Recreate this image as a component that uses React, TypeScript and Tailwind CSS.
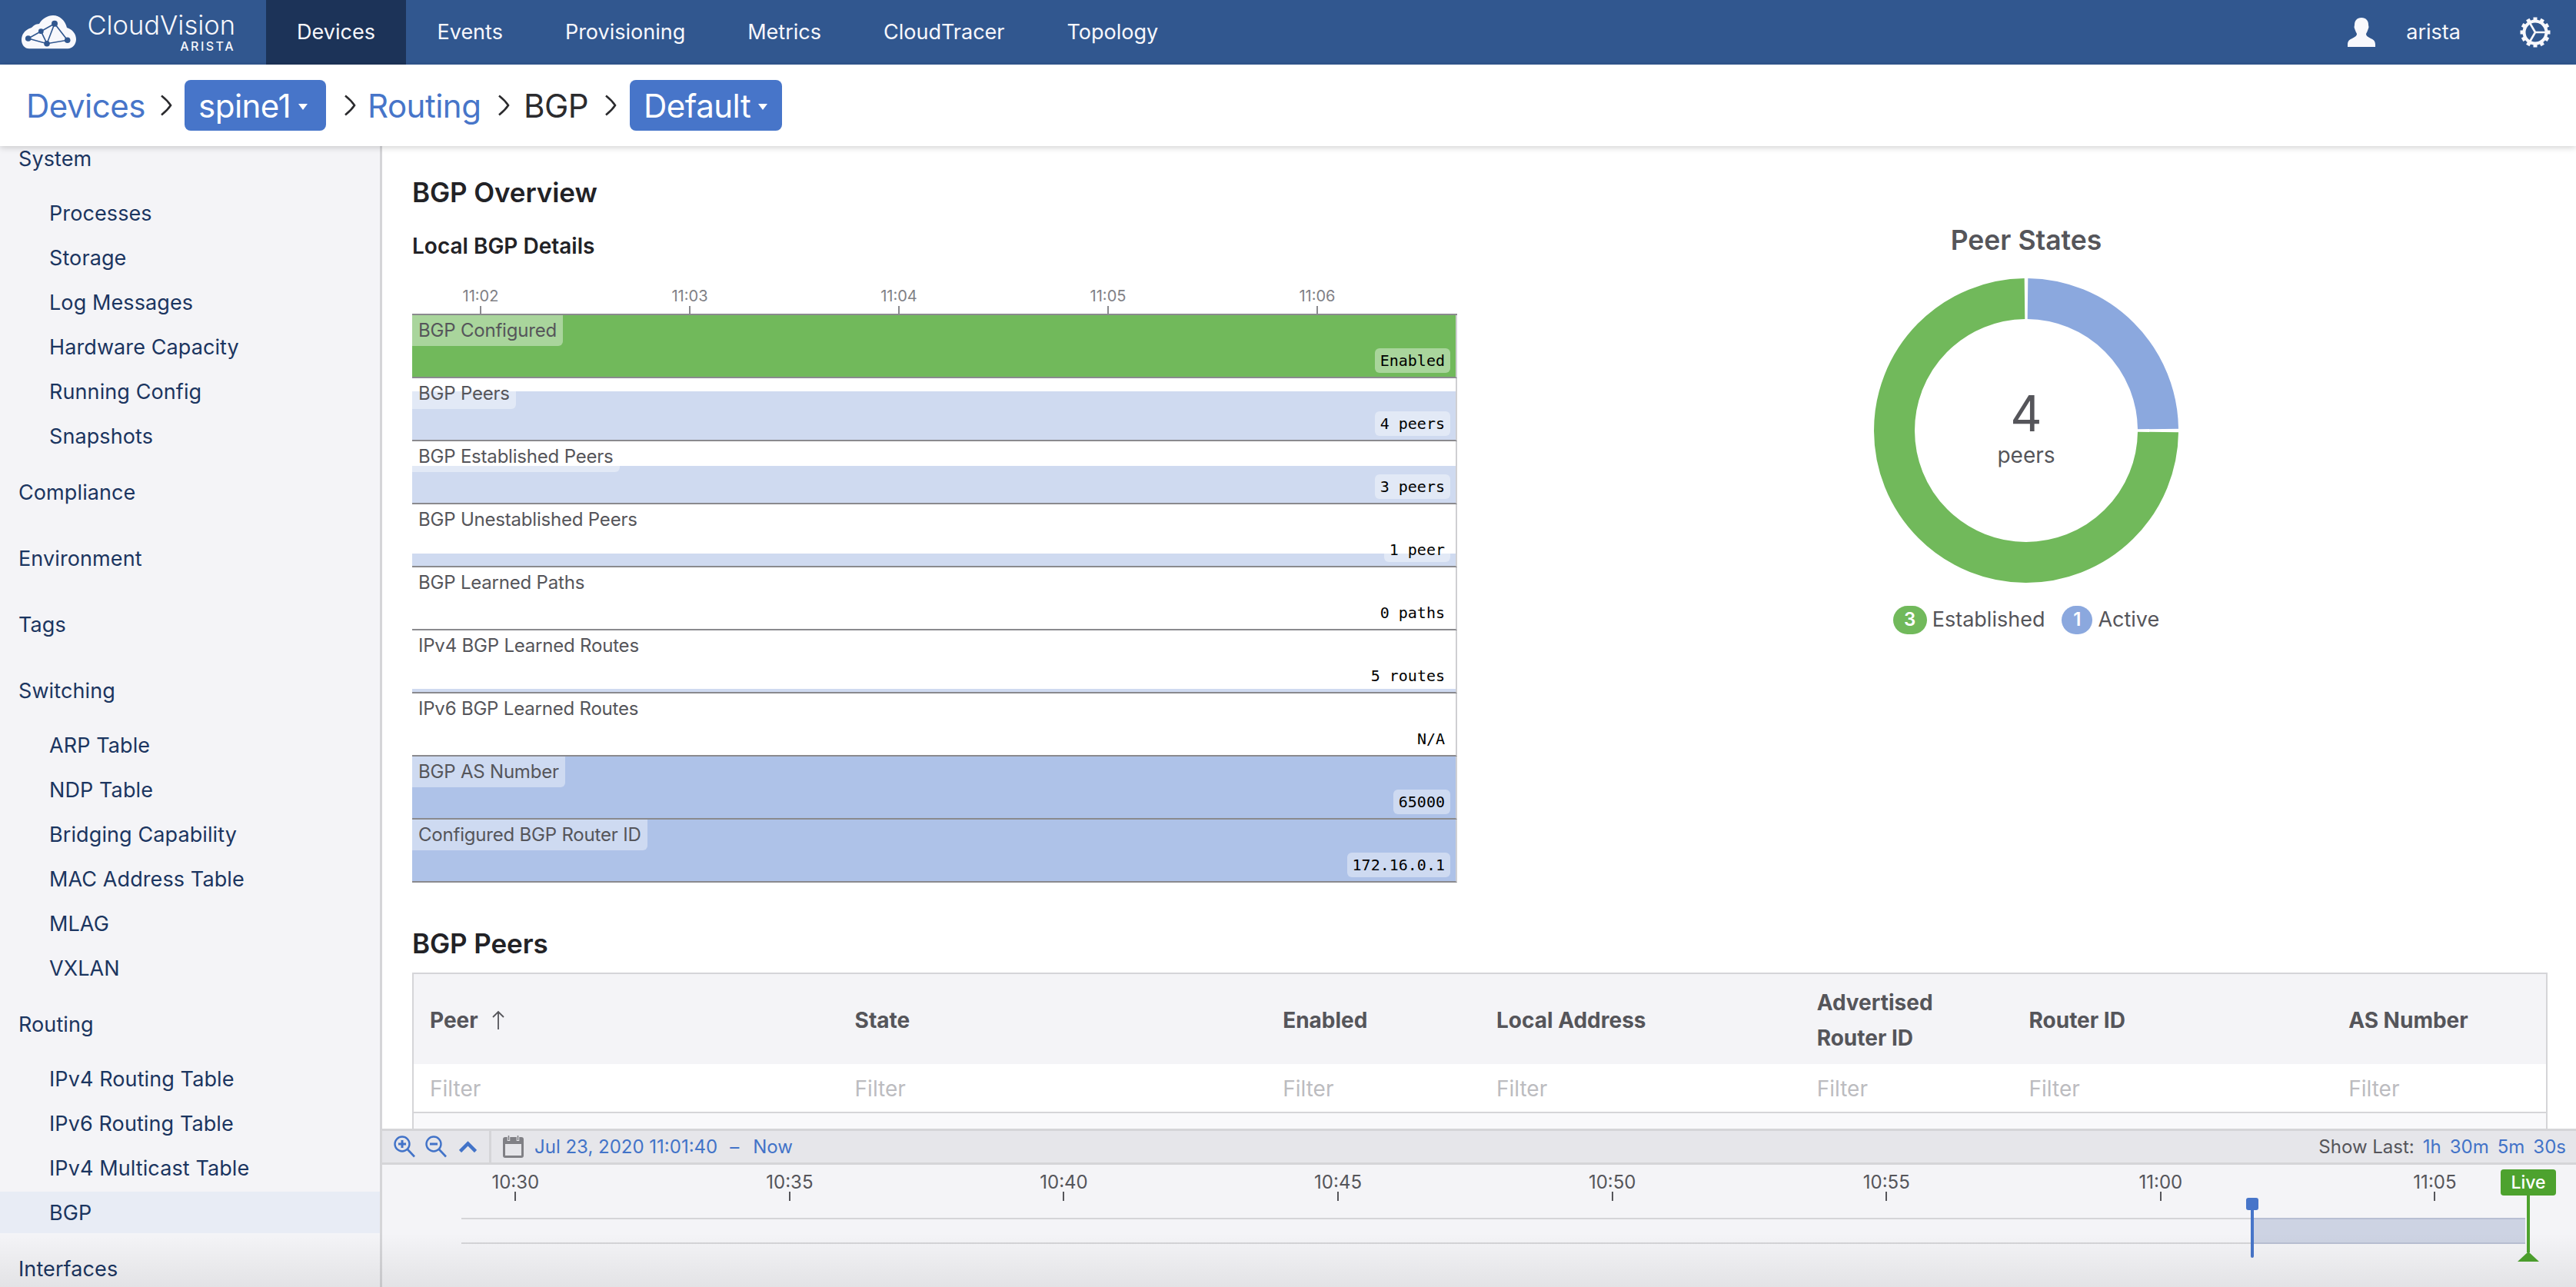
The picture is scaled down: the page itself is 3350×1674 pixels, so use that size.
import { ReactNode } from 'react'

const sans = 'font-["Inter",sans-serif]'

const navItems = ['Events', 'Provisioning', 'Metrics', 'CloudTracer', 'Topology']

const sidebar: { title: string; items?: string[]; active?: string }[] = [
  { title: 'System', items: ['Processes', 'Storage', 'Log Messages', 'Hardware Capacity', 'Running Config', 'Snapshots'] },
  { title: 'Compliance' },
  { title: 'Environment' },
  { title: 'Tags' },
  { title: 'Switching', items: ['ARP Table', 'NDP Table', 'Bridging Capability', 'MAC Address Table', 'MLAG', 'VXLAN'] },
  { title: 'Routing', items: ['IPv4 Routing Table', 'IPv6 Routing Table', 'IPv4 Multicast Table', 'BGP'], active: 'BGP' },
  { title: 'Interfaces' },
]

const rows = [
  { label: 'BGP Configured', value: 'Enabled', fill: 'h-full bg-[#71b95b]', on: true },
  { label: 'BGP Peers', value: '4 peers', fill: 'h-[63px] bg-[#cfdaf0]', on: true },
  { label: 'BGP Established Peers', value: '3 peers', fill: 'h-[48px] bg-[#cfdaf0]', on: true },
  { label: 'BGP Unestablished Peers', value: '1 peer', fill: 'h-[16px] bg-[#cfdaf0]', on: true },
  { label: 'BGP Learned Paths', value: '0 paths', fill: 'h-0', on: false },
  { label: 'IPv4 BGP Learned Routes', value: '5 routes', fill: 'h-[4px] bg-[#cfdaf0]', on: false },
  { label: 'IPv6 BGP Learned Routes', value: 'N/A', fill: 'h-0', on: false },
  { label: 'BGP AS Number', value: '65000', fill: 'h-full bg-[#aec2e8]', on: true },
  { label: 'Configured BGP Router ID', value: '172.16.0.1', fill: 'h-full bg-[#aec2e8]', on: true },
]

const columns = [
  { name: 'Peer', width: 'w-[553px]' },
  { name: 'State', width: 'w-[557px]' },
  { name: 'Enabled', width: 'w-[278px]' },
  { name: 'Local Address', width: 'w-[417px]' },
  { name: 'Advertised Router ID', width: 'w-[276px]' },
  { name: 'Router ID', width: 'w-[416px]' },
  { name: 'AS Number', width: 'w-[278px]' },
]

function Chevron() {
  return (
    <svg className="w-[16px] h-[28px] text-[#2b2b2e]" viewBox="0 0 16 28" fill="none" stroke="currentColor" strokeWidth={2.6}>
      <path d="M2 1.500c5 4 9 8 12 12.500-3 4.500-7 8.500-12 12.500" />
    </svg>
  )
}

function Crumb({ children, w }: { children: ReactNode; w: string }) {
  return (
    <button className={`${w} h-[66px] rounded-[8px] bg-[#4775c9] text-white flex items-center pl-[18px] gap-[10px]`}>
      {children}
      <span className="w-0 h-0 border-x-[6px] border-x-transparent border-t-[8px] border-t-white mt-[4px]" />
    </button>
  )
}

function Logo() {
  return (
    <svg className="w-[71px] h-[44px]" viewBox="0 0 71 44" fill="#f8f8fc">
      <path d="M10 43.300C4 43.300 0 38 0 32 0 26 3 19 13 16 15 14 18 11 23 11 27 4 34 0 41 0 50 0 57 7 59 16 66 18 71 24 71 31 71 38 66 43.300 60 43.300z" />
      <g stroke="#31578f" strokeWidth={1.6} fill="none">
        <path d="M43 10.700L25.300 20.700 8.700 30 33 36.700 59.700 32.300 43 10.700 33 36.700 25.300 20.700" />
      </g>
      <g fill="#31578f">
        <circle cx="43" cy="10.700" r="4" />
        <circle cx="25.300" cy="20.700" r="3.400" />
        <circle cx="8.700" cy="30" r="3.800" />
        <circle cx="33" cy="36.700" r="3.800" />
        <circle cx="59.700" cy="32.300" r="3.800" />
      </g>
    </svg>
  )
}

function Gear() {
  const teeth = Array.from({ length: 12 }, (_, i) => i * 30)
  return (
    <svg className="w-[42px] h-[42px]" viewBox="0 0 42 42" fill="none" stroke="#f8f8fc">
      <circle cx="21" cy="21" r="14.500" strokeWidth={4} />
      {teeth.map((a) => (
        <path key={a} d="M21 1.500v5" strokeWidth={5} transform={`rotate(${a} 21 21)`} />
      ))}
      <path d="M21 21h14M21 21l-7-12M21 21l-7 12" strokeWidth={2.6} />
    </svg>
  )
}

function Donut() {
  // ring drawn as two arc segments, r 171.5, stroke 53
  return (
    <svg className="w-[400px] h-[400px]" viewBox="0 0 400 400" fill="none" strokeWidth={53}>
      <path d="M202 28.500A171.500 171.500 0 0 1 371.500 198" stroke="#8ba8de" />
      <path d="M371.500 202A171.500 171.500 0 1 1 198 28.500" stroke="#71b95b" />
    </svg>
  )
}

export default function App() {
  return (
    <div className={`relative w-[3350px] h-[1674px] overflow-hidden flex flex-col bg-white ${sans}`}>
      <header className="h-[84px] shrink-0 bg-[#31578f] flex items-center text-[#f8f8fc] text-[27px]">
        <div className="w-[346px] shrink-0 flex items-center pl-[28px] gap-[16px]">
          <Logo />
          <div className="flex flex-col items-end w-[191px]">
            <span className="text-[34.5px] leading-[38px] font-light -mt-[3px]">CloudVision</span>
            <span className="text-[16px] leading-[16px] font-medium tracking-[2.5px]">ARISTA</span>
          </div>
        </div>
        <div className="h-full w-[182px] bg-[#1c3358] flex items-center justify-center">Devices</div>
        <nav className="flex">
          {navItems.map((n) => (
            <a key={n} className="px-[40.5px]">{n}</a>
          ))}
        </nav>
        <div className="ml-auto flex items-center">
          <svg className="w-[36px] h-[38px]" viewBox="0 0 36 38" fill="#f8f8fc">
            <path d="M18 0c6 0 9 4 9 9 0 2 1 3 0 5-1 3-2 5-3 7 0 3 3 4 6 6 3 1 6 3 6 8v3H0v-3c0-5 3-7 6-8 3-2 6-3 6-6-1-2-2-4-3-7-1-2 0-3 0-5 0-5 3-9 9-9z" />
          </svg>
          <span className="ml-[40px]">arista</span>
          <div className="ml-[76px] mr-[32px]">
            <Gear />
          </div>
        </div>
      </header>

      <div className="relative z-10 h-[106px] shrink-0 bg-white shadow-[0_2px_8px_rgba(0,0,0,0.18)] flex items-center pl-[34px] text-[42px] tracking-[-0.5px]">
        <span className="text-[#4775c9] w-[174px]">Devices</span>
        <Chevron />
        <div className="ml-[16px]">
          <Crumb w="w-[184px]">spine1</Crumb>
        </div>
        <div className="ml-[23px]"><Chevron /></div>
        <span className="ml-[15px] w-[169px] text-[#4775c9]">Routing</span>
        <Chevron />
        <span className="ml-[18px] w-[105px] text-[#2b2b2e]">BGP</span>
        <Chevron />
        <div className="ml-[17px]">
          <Crumb w="w-[198px]">Default</Crumb>
        </div>
      </div>

      <div className="flex-1 flex min-h-0">
        <aside className="w-[497px] shrink-0 bg-[#f4f4f7] border-r-[3px] border-[#d5d5d8] overflow-hidden text-[27px] tracking-[0.1px] text-[#1b3560]">
          <div className="-mt-[12px]">
            {sidebar.map((g) => (
              <div key={g.title}>
                <div className={`h-[58px] flex items-center pl-[24px] ${g.items ? '' : 'mb-[28px]'}`}>{g.title}</div>
                {g.items && (
                  <ul className="py-[14px]">
                    {g.items.map((i) => (
                      <li
                        key={i}
                        className={`h-[54px] mb-[4px] flex items-center pl-[64px] pt-[2px] ${i === g.active ? 'bg-[#e8ecf5]' : ''}`}
                      >
                        {i}
                      </li>
                    ))}
                  </ul>
                )}
              </div>
            ))}
          </div>
        </aside>

        <div className="flex-1 min-w-0 flex flex-col">
          <main className="flex-1 min-h-0 overflow-hidden pl-[39px] pt-[38px]">
            <div className="flex">
              <section className="w-[1359px] shrink-0">
                <h2 className="text-[35px] leading-[44px] font-semibold tracking-[-0.1px] text-[#222226]">BGP Overview</h2>
                <h3 className="mt-[30px] text-[28px] leading-[36px] font-semibold text-[#222226]">Local BGP Details</h3>
                <div className="mt-[30px] ml-[-47px] flex h-[40px] text-[20px] text-[#808085]">
                  {['11:02', '11:03', '11:04', '11:05', '11:06'].map((t) => (
                    <div key={t} className="w-[272px] flex flex-col items-center">
                      <span className="h-[30px] leading-[34px]">{t}</span>
                      <span className="w-[2px] h-[10px] bg-[#8a8a8e]" />
                    </div>
                  ))}
                </div>
                <div className="border-t-[2px] border-[#8a8a8e]">
                  {rows.map((r) => (
                    <div key={r.label} className="relative h-[82px] border-b-[2px] border-r-[2px] border-b-[#8a8a8e] border-r-[#cfcfd2] flex flex-col justify-end">
                      <div className={r.fill} />
                      <span className={`absolute left-0 top-0 h-[40px] px-[8px] leading-[40px] text-[24px] tracking-[-0.2px] text-[#55555a] rounded-br-[6px] ${r.on ? 'bg-white/40' : ''}`}>
                        {r.label}
                      </span>
                      <span className={`absolute right-[7px] bottom-[5px] h-[32px] px-[7px] leading-[32px] rounded-[6px] font-["DejaVu_Sans_Mono",monospace] text-[20px] text-black ${r.on ? 'bg-white/40' : ''}`}>
                        {r.value}
                      </span>
                    </div>
                  ))}
                </div>
              </section>
              <section className="ml-[440px] w-[600px] flex flex-col items-center -mt-[2px]">
                <h3 className="h-[44px] mt-[65px] leading-[44px] text-[35.5px] font-semibold text-[#55555a]">Peer States</h3>
                <div className="relative mt-[25px]">
                  <Donut />
                  <div className="absolute inset-0 flex flex-col items-center justify-center text-[#55555a]">
                    <span className="text-[64px] leading-[64px] -mt-[4px]">4</span>
                    <span className="text-[28px] leading-[36px] mt-[4px]">peers</span>
                  </div>
                </div>
                <div className="mt-[26px] flex items-center text-[27px] text-[#55555a]">
                  <span className="w-[44px] h-[37px] rounded-full bg-[#71b95b] text-white text-[24px] font-semibold flex items-center justify-center">3</span>
                  <span className="ml-[7px]">Established</span>
                  <span className="ml-[22px] w-[40px] h-[37px] rounded-full bg-[#8ba8de] text-white text-[24px] font-semibold flex items-center justify-center">1</span>
                  <span className="ml-[7px]">Active</span>
                </div>
              </section>
            </div>

            <h2 className="mt-[57px] text-[35px] leading-[44px] font-semibold tracking-[-0.1px] text-[#222226]">BGP Peers</h2>
            <div className="mt-[16px] w-[2777px] border-[2px] border-b-0 border-[#d5d5d8]">
              <div className="flex h-[117px] pt-[2px] bg-[#f4f4f7] items-center text-[28px] leading-[46px] font-bold text-[#55555a]">
                {columns.map((c) => (
                  <div key={c.name} className={`${c.width} pl-[21px] flex items-center gap-[16px] ${c.name.startsWith('Adv') ? 'pr-[60px]' : ''}`}>
                    {c.name}
                    {c.name === 'Peer' && (
                      <svg className="w-[20px] h-[26px]" viewBox="0 0 20 26" fill="none" stroke="#55555a" strokeWidth={1.8}>
                        <path d="M10 25V2M3 9l7-7 7 7" />
                      </svg>
                    )}
                  </div>
                ))}
              </div>
              <div className="flex h-[64px] pt-[2px] items-center text-[28px] text-[#bcbcc0] border-b-[2px] border-[#d5d5d8]">
                {columns.map((c) => (
                  <div key={c.name} className={`${c.width} pl-[21px]`}>Filter</div>
                ))}
              </div>
              <div className="h-[40px] bg-[#f9f9fb]" />
            </div>
          </main>

          <div className="relative h-[206px] shrink-0 bg-[#f4f4f7] text-[24px]">
            <div className="h-[47px] bg-[#e6e6ea] border-y-[3px] border-[#d5d5d8] flex items-center text-[#4273c8]">
              <div className="h-full w-[142px] border-r-[3px] border-[#d5d5d8] flex items-center pl-[15px]">
                <svg className="w-[29px] h-[29px]" viewBox="0 0 29 29" fill="none" stroke="#4273c8" strokeWidth={2.4}>
                  <circle cx="11" cy="11" r="9.500" />
                  <path d="M6 11h10M11 6v10" strokeWidth={3} />
                  <path d="M18 18l9 9.500" strokeWidth={2.6} />
                </svg>
                <svg className="ml-[12px] w-[29px] h-[29px]" viewBox="0 0 29 29" fill="none" stroke="#4273c8" strokeWidth={2.4}>
                  <circle cx="11" cy="11" r="9.500" />
                  <path d="M6 11h10" strokeWidth={3} />
                  <path d="M18 18l9 9.500" strokeWidth={2.6} />
                </svg>
                <svg className="ml-[15px] w-[23px] h-[15px]" viewBox="0 0 23 15" fill="none" stroke="#4273c8" strokeWidth={4.5}>
                  <path d="M1.500 13.500l10-10 10 10" />
                </svg>
              </div>
              <svg className="ml-[15px] w-[27px] h-[29px]" viewBox="0 0 27 29" fill="#808085">
                <path fillRule="evenodd" d="M3 2h21a3 3 0 0 1 3 3v21a3 3 0 0 1-3 3H3a3 3 0 0 1-3-3V5a3 3 0 0 1 3-3zM3 11v15h21V11z" />
                <path d="M7.500 0v7M19.500 0v7" stroke="#e6e6ea" strokeWidth={3.500} />
                <path d="M7.500 0v6M19.500 0v6" stroke="#808085" strokeWidth={1.500} />
              </svg>
              <span className="ml-[14px]">Jul 23, 2020 11:01:40</span>
              <span className="ml-[16px]">–</span>
              <span className="ml-[18px]">Now</span>
              <div className="ml-auto flex items-center pr-[13px] gap-[11px]">
                <span className="text-[#55555a]">Show Last:</span>
                <span>1h</span>
                <span>30m</span>
                <span>5m</span>
                <span>30s</span>
              </div>
            </div>
            <div className="ml-[-5px] flex pt-[8px] text-[#55555a]">
              {['10:30', '10:35', '10:40', '10:45', '10:50', '10:55', '11:00', '11:05'].map((t) => (
                <div key={t} className="w-[356.6px] shrink-0 flex flex-col items-center">
                  <span className="h-[27px] leading-[30px]">{t}</span>
                  <span className="w-[2px] h-[12px] bg-[#55555a]" />
                </div>
              ))}
            </div>
            <div className="relative ml-[103px] mt-[22px] mr-[66px] h-[34px] border-y-[2px] border-[#d5d5d8]">
              <div className="absolute right-0 top-[-2px] bottom-[-2px] w-[354px] bg-[#cdd3e3] border-y-[2px] border-[#b8bfd3]" />
            </div>
            {/* range handle */}
            <div className="absolute left-[2424px] top-[90px] flex flex-col items-center">
              <span className="w-[16px] h-[16px] rounded-[3px] bg-[#4775c9]" />
              <span className="w-[4px] h-[62px] bg-[#4775c9] rounded-b-[2px]" />
            </div>
            {/* live marker */}
            <div className="absolute left-[2755px] top-[53px] flex flex-col items-center">
              <span className="w-[72px] h-[34px] rounded-[4px] bg-[#4da22e] text-white text-[23px] leading-[34px] text-center font-medium">Live</span>
              <span className="w-[4px] h-[74px] bg-[#4da22e]" />
              <span className="w-0 h-0 border-x-[14px] border-x-transparent border-b-[13px] border-b-[#4da22e] -mt-[1px]" />
            </div>
          </div>
        </div>
      </div>
      <div className="absolute left-0 right-0 bottom-0 h-[70px] bg-gradient-to-b from-transparent to-black/[0.07] pointer-events-none z-20" />
    </div>
  )
}
